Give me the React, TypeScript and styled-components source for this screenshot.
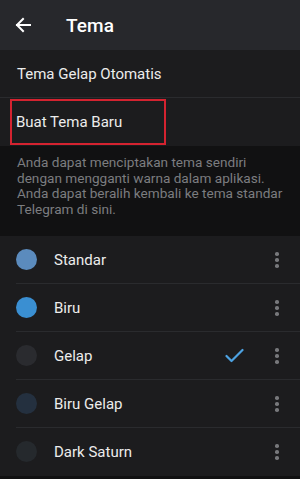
import styled, { createGlobalStyle } from 'styled-components'

const GlobalStyle = createGlobalStyle`
  html, body {
    margin: 0;
    padding: 0;
    background: #111112;
    font-family: Roboto, 'Noto Sans', sans-serif;
  }
`

const Screen = styled.div`
  width: 300px;
  height: 479px;
  overflow: hidden;
  background: #111112;
  display: flex;
  flex-direction: column;
`

const Header = styled.div`
  height: 50px;
  flex-shrink: 0;
  display: flex;
  align-items: center;
  background: #27282c;
  padding-left: 15px;
`

const BackButton = styled.div`
  width: 16px;
  height: 16px;
  display: flex;
  align-items: center;
  justify-content: center;
  margin-right: 35px;
`

const Title = styled.div`
  color: #ffffff;
  font-size: 19px;
  font-weight: 500;
  letter-spacing: 0.1px;
`

const Section = styled.div`
  background: #1c1c1e;
`

const Row = styled.div<{ $divider?: boolean }>`
  height: 48px;
  display: flex;
  align-items: center;
  padding-left: 17px;
  color: #ececec;
  font-size: 15px;
  border-bottom: ${({ $divider }) => ($divider ? '1px solid #2a2b2e' : 'none')};
  box-sizing: border-box;
`

const Highlight = styled.div`
  border: 2px solid #d42330;
  margin-left: -7px;
  padding: 11px 0 11px 4px;
  width: 156px;
  height: 46px;
  box-sizing: border-box;
  display: flex;
  align-items: center;
`

const Info = styled.div`
  padding: 9px 10px 17px 17px;
  color: #7c7d80;
  font-size: 13.6px;
  line-height: 15.7px;
`

const List = styled.div`
  background: #1c1c1e;
  margin-top: 1px;
`

const ThemeRow = styled.div`
  height: 48px;
  display: flex;
  align-items: center;
  position: relative;
  padding-left: 16px;
  padding-right: 21px;
`

const RowDivider = styled.div`
  position: absolute;
  left: 16px;
  right: 0;
  bottom: 0;
  height: 1px;
  background: #2a2b2e;
`

const Dot = styled.div<{ $color: string }>`
  width: 21px;
  height: 21px;
  border-radius: 50%;
  background: ${({ $color }) => $color};
  margin-right: 17px;
  flex-shrink: 0;
`

const ThemeName = styled.div`
  flex: 1;
  color: #ececec;
  font-size: 15px;
`

const Check = styled.div`
  width: 20px;
  display: flex;
  justify-content: center;
  margin-right: 31px;
`

const Dots = styled.div`
  display: flex;
  flex-direction: column;
  gap: 2.5px;
  width: 4px;

  span {
    width: 3.5px;
    height: 3.5px;
    border-radius: 50%;
    background: #77787b;
  }
`

const themes = [
  { name: 'Standar', color: '#5b8bbd' },
  { name: 'Biru', color: '#3a8fd2' },
  { name: 'Gelap', color: '#2a2b2f', active: true },
  { name: 'Biru Gelap', color: '#24303f' },
  { name: 'Dark Saturn', color: '#25292d' },
]

export default function App() {
  return (
    <>
      <GlobalStyle />
      <Screen>
        <Header>
          <BackButton>
            <svg width="16" height="16" viewBox="0 0 16 16" fill="none">
              <path d="M15 8H2M8 2L2 8l6 6" stroke="#fff" strokeWidth="2" strokeLinecap="square" />
            </svg>
          </BackButton>
          <Title>Tema</Title>
        </Header>
        <Section>
          <Row $divider>Tema Gelap Otomatis</Row>
          <Row>
            <Highlight>Buat Tema Baru</Highlight>
          </Row>
        </Section>
        <Info>
          Anda dapat menciptakan tema sendiri
          <br />
          dengan mengganti warna dalam aplikasi.
          <br />
          Anda dapat beralih kembali ke tema standar
          <br />
          Telegram di sini.
        </Info>
        <List>
          {themes.map((t, i) => (
            <ThemeRow key={t.name}>
              <Dot $color={t.color} />
              <ThemeName>{t.name}</ThemeName>
              {t.active && (
                <Check>
                  <svg width="19" height="15" viewBox="0 0 19 15" fill="none">
                    <path d="M1.5 8l5 5L17.5 2" stroke="#4da2e2" strokeWidth="2.2" strokeLinecap="round" strokeLinejoin="round" />
                  </svg>
                </Check>
              )}
              <Dots>
                <span />
                <span />
                <span />
              </Dots>
              {i < themes.length - 1 && <RowDivider />}
            </ThemeRow>
          ))}
        </List>
      </Screen>
    </>
  )
}
